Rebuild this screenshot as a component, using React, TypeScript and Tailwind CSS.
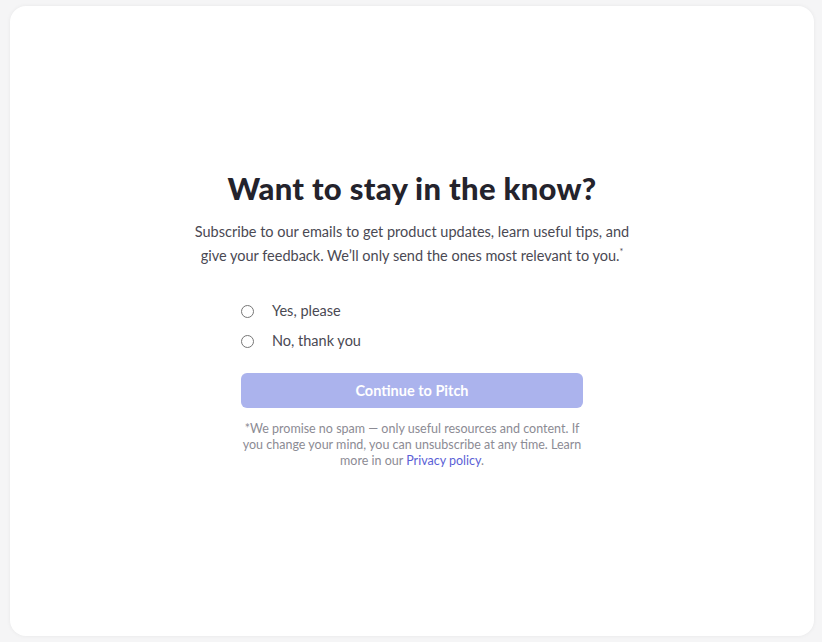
import React, { useState } from 'react';

const App: React.FC = () => {
  const [choice, setChoice] = useState<string>('');

  return (
    <div className="min-h-screen bg-[#f5f5f6] pt-[6px] pb-[6px] pl-[10px] pr-[8px] flex" style={{ fontFamily: 'Lato, "Noto Sans", sans-serif' }}>
      {/* Card */}
      <div className="flex-1 h-[630px] bg-white rounded-[16px] shadow-[0_0_4px_rgba(0,0,0,0.06)] flex flex-col items-center justify-center">
        <div className="flex flex-col items-center -mt-[3px]">
          <h1 className="text-[31px] leading-[36px] font-black text-[#24232c] tracking-[0.3px]">
            Want to stay in the know?
          </h1>
          <p className="mt-[14px] w-[450px] text-center text-[14.5px] leading-[24px] text-[#4a4953]">
            Subscribe to our emails to get product updates, learn useful tips, and give your feedback. We’ll only send the ones most relevant to you.<span className="text-[9px] align-top leading-[16px]">*</span>
          </p>

          <div className="w-[342px] mt-[33px] flex flex-col gap-[10px]">
            {/* Options */}
            <label className="flex items-center h-[20px] cursor-pointer">
              <input
                type="radio"
                name="subscribe"
                className="m-0 w-[13px] h-[13px]"
                checked={choice === 'yes'}
                onChange={() => setChoice('yes')}
              />
              <span className="ml-[18px] text-[14.5px] text-[#4a4953]">Yes, please</span>
            </label>
            <label className="flex items-center h-[20px] cursor-pointer">
              <input
                type="radio"
                name="subscribe"
                className="m-0 w-[13px] h-[13px]"
                checked={choice === 'no'}
                onChange={() => setChoice('no')}
              />
              <span className="ml-[18px] text-[14.5px] text-[#4a4953]">No, thank you</span>
            </label>

            <button className="mt-[12px] h-[35px] w-full rounded-[6px] bg-[#abb3ed] text-white text-[14.5px] font-bold">
              Continue to Pitch
            </button>

            <p className="mt-[3px] text-center text-[12.5px] leading-[16px] text-[#8c8b94]">
              *We promise no spam — only useful resources and content. If you change your mind, you can unsubscribe at any time. Learn more in our <a href="#" className="text-[#5b5fd6]">Privacy policy</a>.
            </p>
          </div>
        </div>
      </div>
    </div>
  );
};

export default App;
